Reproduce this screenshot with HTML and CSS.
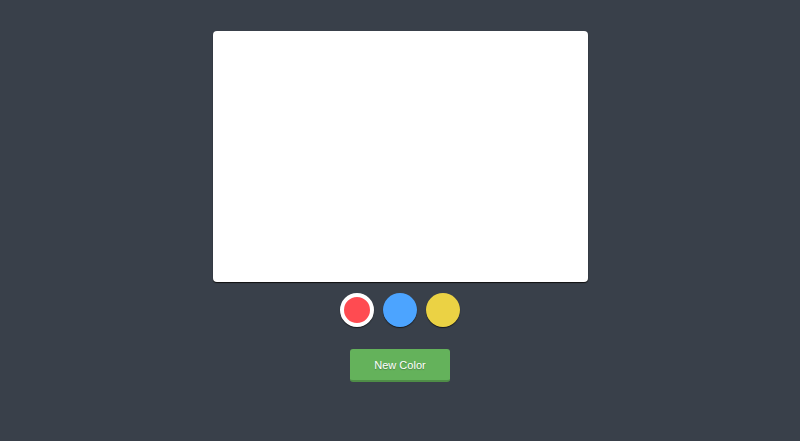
FILE: index.html
```html
<!DOCTYPE html>
<html>
<head>
<meta charset="utf-8">
<link rel="stylesheet" href="styles.css">
</head>
<body>
<main class="app">
  <div class="canvas"></div>
  <div class="swatches">
    <span class="swatch red selected"></span>
    <span class="swatch blue"></span>
    <span class="swatch yellow"></span>
  </div>
  <button class="new-color">New Color</button>
</main>
</body>
</html>
```
FILE: styles.css
```css
html, body {
  margin: 0;
  padding: 0;
  background: #39404a;
  height: 100%;
}
.app {
  display: flex;
  flex-direction: column;
  align-items: center;
  padding-top: 31px;
}
.canvas {
  width: 375px;
  height: 251px;
  background: #fff;
  border-radius: 4px;
  box-shadow: 0 1px 1px #111;
}
.swatches {
  display: flex;
  gap: 9px;
  margin-top: 11px;
}
.swatch {
  display: block;
  width: 34px;
  height: 34px;
  border-radius: 50%;
  box-sizing: border-box;
  box-shadow: 0 1px 1px rgba(0,0,0,0.6);
}
.red { background: #ff4b51; }
.blue { background: #4ca4ff; }
.yellow { background: #ebd244; }
.selected { border: 4px solid #fff; }
.new-color {
  margin-top: 22px;
  width: 100px;
  height: 33px;
  border: none;
  border-bottom: 2px solid #4f8d47;
  border-radius: 3px;
  background: #64b25b;
  color: #fff;
  font-family: "Liberation Sans", Arial, sans-serif;
  font-size: 11px;
  text-shadow: 0 1px 1px rgba(0,0,0,0.25);
  padding: 0;
  cursor: pointer;
}
```
